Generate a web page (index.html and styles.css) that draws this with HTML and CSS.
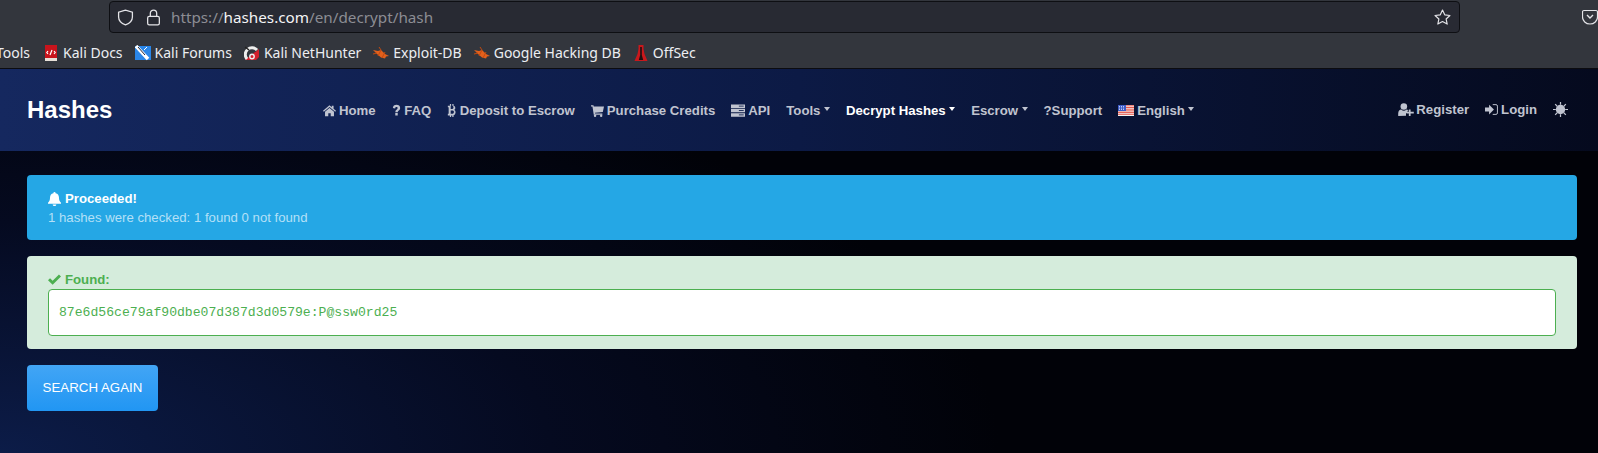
FILE: index.html
```html
<!DOCTYPE html>
<html lang="en">
<head>
  <meta charset="UTF-8">
  <title>Hashes</title>
  <link rel="stylesheet" href="styles.css">
</head>
<body>
<!-- browser chrome -->
<div class="chrome">
  <div class="toolbar">
    <div class="urlbar">
      <svg class="url-icon" viewBox="0 0 16 16"><path d="M8 1 1.500 3v4.500c0 3.600 2.800 6.100 6.500 7.500 3.700-1.400 6.500-3.900 6.500-7.500V3z" fill="none" stroke="#e4e4e8" stroke-width="1.200"/></svg>
      <svg class="url-icon lock" viewBox="0 0 16 16"><rect x="2.500" y="7" width="11" height="8" rx="1.500" fill="none" stroke="#e4e4e8" stroke-width="1.200"/><path d="M5 7V4a3 3 0 0 1 6 0v3" fill="none" stroke="#e4e4e8" stroke-width="1.200"/></svg>
      <span class="url"><span class="dim">https://</span>hashes.com<span class="dim">/en/decrypt/hash</span></span>
      <svg class="url-icon star" viewBox="0 0 16 16"><path d="m8 1 2.100 4.500 4.900.6-3.600 3.300 1 4.800L8 11.800l-4.400 2.400 1-4.800L1 6.100l4.900-.6z" fill="none" stroke="#e4e4e8" stroke-width="1.100" stroke-linejoin="round"/></svg>
    </div>
    <svg class="pocket" viewBox="0 0 16 16"><path d="M2 1.500h12A1.500 1.500 0 0 1 15.500 3v5a7.500 7 0 0 1-15 0V3A1.500 1.500 0 0 1 2 1.500z" fill="none" stroke="#e4e4e8" stroke-width="1.200"/><path d="m5 6 3 3 3-3" fill="none" stroke="#e4e4e8" stroke-width="1.400"/></svg>
  </div>
  <div class="bookmarks">
    <span class="bookmark first">Tools</span>
    <span class="bookmark">
      <svg class="fav" viewBox="0 0 16 16"><rect x="2" y="0" width="12" height="14" fill="#c8141c"/><rect x="2" y="13" width="12" height="3" fill="#e8e0d8"/><path d="M5 6 3.800 7.500 5 9M11 6l1.200 1.500L11 9M9 5 7 10" stroke="#fff" stroke-width="1.200" fill="none"/></svg>
      Kali Docs
    </span>
    <span class="bookmark">
      <svg class="fav" viewBox="0 0 16 16"><rect y="1" width="16" height="14" fill="#2a86e8"/><path d="m1 1 12 13" stroke="#fff" stroke-width="3.500"/><path d="m3 2 7 8" stroke="#223" stroke-width="1"/><path d="M9 5l3-3" stroke="#fff" stroke-width="1"/></svg>
      Kali Forums
    </span>
    <span class="bookmark">
      <svg class="fav" viewBox="0 0 16 16"><path d="M1 15 15 4v8l-3 3z" fill="#d2202c"/><path d="M3 14a6.500 6.500 0 0 1 10-9" fill="none" stroke="#eee" stroke-width="3"/><path d="M1 2l4 3" stroke="#222" stroke-width="1.500"/><circle cx="8" cy="11.500" r="2.200" fill="none" stroke="#eee" stroke-width="1.400"/></svg>
      Kali NetHunter
    </span>
    <span class="bookmark">
      <svg class="fav" viewBox="0 0 16 16"><path d="M0 5l5 1 3-1 4 4 4 2-3 .5-1 2-4-1-4-3.500z" fill="#e2601c"/><path d="m5 11 3-6M9 13l3-6M0 9l4-1M6 2l2 3" stroke="#c24a10" stroke-width="1"/></svg>
      Exploit-DB
    </span>
    <span class="bookmark">
      <svg class="fav" viewBox="0 0 16 16"><path d="M0 5l5 1 3-1 4 4 4 2-3 .5-1 2-4-1-4-3.500z" fill="#e2601c"/><path d="m5 11 3-6M9 13l3-6M0 9l4-1M6 2l2 3" stroke="#c24a10" stroke-width="1"/></svg>
      Google Hacking DB
    </span>
    <span class="bookmark">
      <svg class="fav" viewBox="0 0 16 16"><path d="M5.500 0h5v4l1 5 3 7h-13l3-7 1-5z" fill="#c8181c"/><path d="M7.200 2h1.600v8l1.400 5H5.800l1.400-5z" fill="#1c1012"/></svg>
      OffSec
    </span>
  </div>
</div>

<!-- site nav -->
<nav class="navbar">
  <a class="brand">Hashes</a>
  <ul class="nav-list">
    <li class="nav-item">
      <svg class="ico" viewBox="0 0 16 16"><path d="M8 1.500 0 8.200l1 1.200L8 3.600l7 5.800 1-1.200-3-2.500V2h-2.200v2.100zM2.500 9.500V15h4v-3.700h3V15h4V9.500L8 4.900z"/></svg>Home
    </li>
    <li class="nav-item">
      <svg class="ico narrow" viewBox="0 0 10 16"><path d="M.5 5C.5 2.500 2.500 1 5 1s4.500 1.500 4.500 3.800c0 3-3 3.100-3 5.200H3.500C3.500 7 6.400 6.800 6.400 5c0-.8-.6-1.300-1.400-1.300S3.400 4.300 3.300 5.500zM3.500 11h3v3h-3z"/></svg>FAQ
    </li>
    <li class="nav-item">
      <svg class="ico narrow" viewBox="0 0 10 16"><path d="M3 0h1.500v2H6V0h1.500v2.200C9 2.600 9.700 3.700 9.700 5c0 1.100-.6 1.900-1.400 2.300C9.400 7.700 10 8.700 10 10c0 2-1.100 3.400-2.500 3.700V16H6v-2H4.500v2H3v-2H.5v-2h1V4h-1V2H3zm1 2.200v3.900h2c.9 0 1.400-.9 1.400-2s-.5-1.900-1.400-1.900zm0 5.700v4h2.500c1 0 1.500-1 1.500-2s-.5-2-1.500-2z"/></svg>Deposit to Escrow
    </li>
    <li class="nav-item">
      <svg class="ico" viewBox="0 0 16 16"><path d="M0 1.500h3l.4 1.500H16l-1.500 6.800-9.800 1 .3 1H14v1.500H3.400L1.800 3H0z"/><circle cx="5" cy="14.500" r="1.500"/><circle cx="12.500" cy="14.500" r="1.500"/></svg>Purchase Credits
    </li>
    <li class="nav-item">
      <svg class="ico wide" viewBox="0 0 16 14"><path d="M0 0h16v4H0zM0 5h16v4H0zM0 10h16v4H0z"/><path d="M9 2h5.500M9 7h5.500M9 12h5.500" stroke="#10204e" stroke-width="1"/></svg>API
    </li>
    <li class="nav-item caret">Tools</li>
    <li class="nav-item caret active">Decrypt Hashes</li>
    <li class="nav-item caret">Escrow</li>
    <li class="nav-item">?Support</li>
    <li class="nav-item caret">
      <svg class="flag" viewBox="0 0 16 11">
        <rect width="16" height="11" fill="#f4f4f4"/>
        <path d="M0 .8h16M0 2.500h16M0 4.200h16M0 5.900h16M0 7.600h16M0 9.300h16" stroke="#e4453a" stroke-width=".9"/>
        <rect width="8" height="6" fill="#3d5cc8"/>
        <path d="M1 1.500h6M1 3h6M1 4.500h6" stroke="#dfe6ff" stroke-width=".8" stroke-dasharray="1 1"/>
      </svg>English
    </li>
  </ul>
  <ul class="nav-right">
    <li class="nav-item">
      <svg class="ico user" viewBox="0 0 18 15"><circle cx="6.500" cy="4" r="3.800"/><path d="M0 15v-3c0-3 1.800-4.500 3.500-4.500C4.500 8.500 5.500 9 6.500 9s2-.5 3-1.500c1 0 1.800.5 2.500 1.300h-1.300v3H9v3zM12.300 7.500h2v2.500h3.700v2h-3.700v3h-2v-3H10v-2h2.300z"/></svg>Register
    </li>
    <li class="nav-item">
      <svg class="ico" viewBox="0 0 16 14"><path d="M0 4.500h5V1l6 6-6 6V9.500H0z"/><path d="M9.500 1h4A1.800 1.800 0 0 1 15.300 2.800v8.400a1.800 1.800 0 0 1-1.800 1.800h-4" fill="none" stroke="#c0c4d0" stroke-width="1.200"/></svg>Login
    </li>
    <li class="nav-item">
      <svg class="ico sun" viewBox="0 0 16 16"><circle cx="8" cy="8" r="5"/><path d="M8 0v3M8 13v3M0 8h3M13 8h3M2.300 2.300 4.500 4.500M11.500 11.500l2.200 2.200M2.300 13.700l2.200-2.200M11.500 4.500l2.200-2.200" stroke="#c0c4d0" stroke-width="1.300"/></svg>
    </li>
  </ul>
</nav>

<main class="content">
  <div class="alert alert-info">
    <div class="alert-title">
      <svg class="alert-ico" viewBox="0 0 14 15"><path d="M7 0a1.200 1.200 0 0 1 1.200 1.200c2.600.5 3.600 2.500 3.600 4.800 0 3 .9 4.500 2.200 5.500v1H0v-1C1.300 10.500 2.200 9 2.200 6c0-2.300 1-4.300 3.600-4.800A1.200 1.200 0 0 1 7 0zM5 13.300h4A2 1.700 0 0 1 5 13.300z"/></svg>Proceeded!
    </div>
    <div class="alert-sub">1 hashes were checked: 1 found 0 not found</div>
  </div>

  <div class="alert alert-success">
    <div class="found-title">
      <svg class="alert-ico" viewBox="0 0 14 12"><path d="m0 6.200 2.200-2.200 2.800 2.800L11.800 0 14 2.200 5 11.200z"/></svg>Found:
    </div>
    <div class="result">87e6d56ce79af90dbe07d387d3d0579e:P@ssw0rd25</div>
  </div>

  <a class="btn">SEARCH AGAIN</a>
</main>
</body>
</html>
```

FILE: styles.css
```css
* {
  margin: 0;
  padding: 0;
  box-sizing: border-box;
}

html, body {
  height: 453px;
  overflow: hidden;
}

body {
  font-family: "Liberation Sans", Arial, sans-serif;
  background: radial-gradient(ellipse 1000px 420px at 0 100%, #0c1c48 0, #050a20 55%, #010208 100%) #010208;
}

ul {
  list-style: none;
}

/* browser chrome */
.chrome {
  background-color: #33363d;
  height: 69px;
  border-bottom: 1px solid #0c0c10;
}

.toolbar {
  height: 34px;
  padding-top: 1px;
  display: flex;
  align-items: flex-start;
}

.urlbar {
  width: 1351px;
  height: 32px;
  margin-left: 109px;
  padding: 0 8px 0 7px;
  display: flex;
  align-items: center;
  background-color: #282a33;
  border: 1px solid #0e0f13;
  border-radius: 4px;
}

.url-icon {
  width: 17px;
  height: 17px;
  flex: none;
}

.lock {
  margin-left: 11px;
}

.url {
  margin-left: 9px;
  font: 15.25px "Noto Sans", sans-serif;
  color: #f4f4f6;
  white-space: nowrap;
}

.url .dim {
  color: #8c8d93;
}

.star {
  margin-left: auto;
}

.pocket {
  width: 16px;
  height: 16px;
  flex: none;
  margin: 8px 0 0 122px;
}

.bookmarks {
  height: 34px;
  padding-top: 3px;
  display: flex;
  align-items: center;
  margin-left: -4px;
  gap: 12px;
  font: 14px "Noto Sans", sans-serif;
  color: #eceef2;
  white-space: nowrap;
}

.bookmark {
  display: flex;
  align-items: center;
  gap: 4px;
}

.first {
  margin-right: 1px;
}

.fav {
  width: 16px;
  height: 16px;
  flex: none;
}

/* site nav */
.navbar {
  height: 82px;
  padding: 0 22px 0 27px;
  display: flex;
  align-items: center;
  background: linear-gradient(90deg, #15285f 0, #0c1a45 50%, #050a1e 100%);
}

.brand {
  width: 88px;
  font-size: 24px;
  font-weight: bold;
  color: #fff;
}

.nav-list {
  margin-left: 200px;
  display: flex;
  align-items: center;
}

.nav-right {
  margin-left: auto;
  display: flex;
  align-items: center;
  margin-top: -2px;
}

.nav-item {
  padding: 0 8px;
  display: flex;
  align-items: center;
  font-size: 13.2px;
  font-weight: bold;
  color: #c0c4d0;
  white-space: nowrap;
}

.nav-item.active {
  color: #fff;
}

.caret::after {
  content: "";
  margin-left: 3.5px;
  margin-bottom: 2px;
  border-top: 4px solid currentColor;
  border-left: 3.5px solid transparent;
  border-right: 3.5px solid transparent;
}

.ico {
  width: 13px;
  height: 13px;
  margin-right: 3px;
  fill: #c0c4d0;
  flex: none;
}

.ico.narrow {
  width: 9px;
  margin-right: 3.5px;
}

.ico.wide {
  width: 14px;
}

.ico.user {
  width: 16px;
  margin-right: 2px;
}

.ico.sun {
  width: 15px;
  height: 15px;
  margin-right: 0;
}

.flag {
  width: 16px;
  height: 11px;
  margin-right: 3px;
  flex: none;
}

/* alerts */
.content {
  padding: 24px 21px 0 27px;
}

.alert {
  border-radius: 4px;
  margin-bottom: 16px;
  padding: 0 21px;
  font-size: 13.2px;
}

.alert-info {
  height: 65px;
  padding-top: 16px;
  background-color: #25a7e5;
}

.alert-title {
  display: flex;
  align-items: center;
  font-weight: bold;
  color: #fff;
  line-height: 15px;
}

.alert-sub {
  margin-top: 4px;
  line-height: 15px;
  color: #b4e0f7;
}

.alert-success {
  height: 93px;
  padding-top: 16px;
  background-color: #d5ecdc;
}

.found-title {
  display: flex;
  align-items: center;
  font-weight: bold;
  color: #4caf50;
  line-height: 15px;
}

.alert-ico {
  width: 13px;
  height: 14px;
  margin-right: 4px;
  fill: currentColor;
}

.result {
  height: 47px;
  margin-top: 2px;
  padding-left: 10px;
  display: flex;
  align-items: center;
  background-color: #fff;
  border: 1px solid #4caf50;
  border-radius: 4px;
  font: 13.125px "Liberation Mono", monospace;
  color: #4caf50;
}

.btn {
  display: block;
  width: 131px;
  height: 46px;
  line-height: 46px;
  text-align: center;
  font-size: 13.3px;
  color: #fff;
  background: linear-gradient(180deg, #42a5f5, #2196f3);
  border-radius: 4px;
}
```
